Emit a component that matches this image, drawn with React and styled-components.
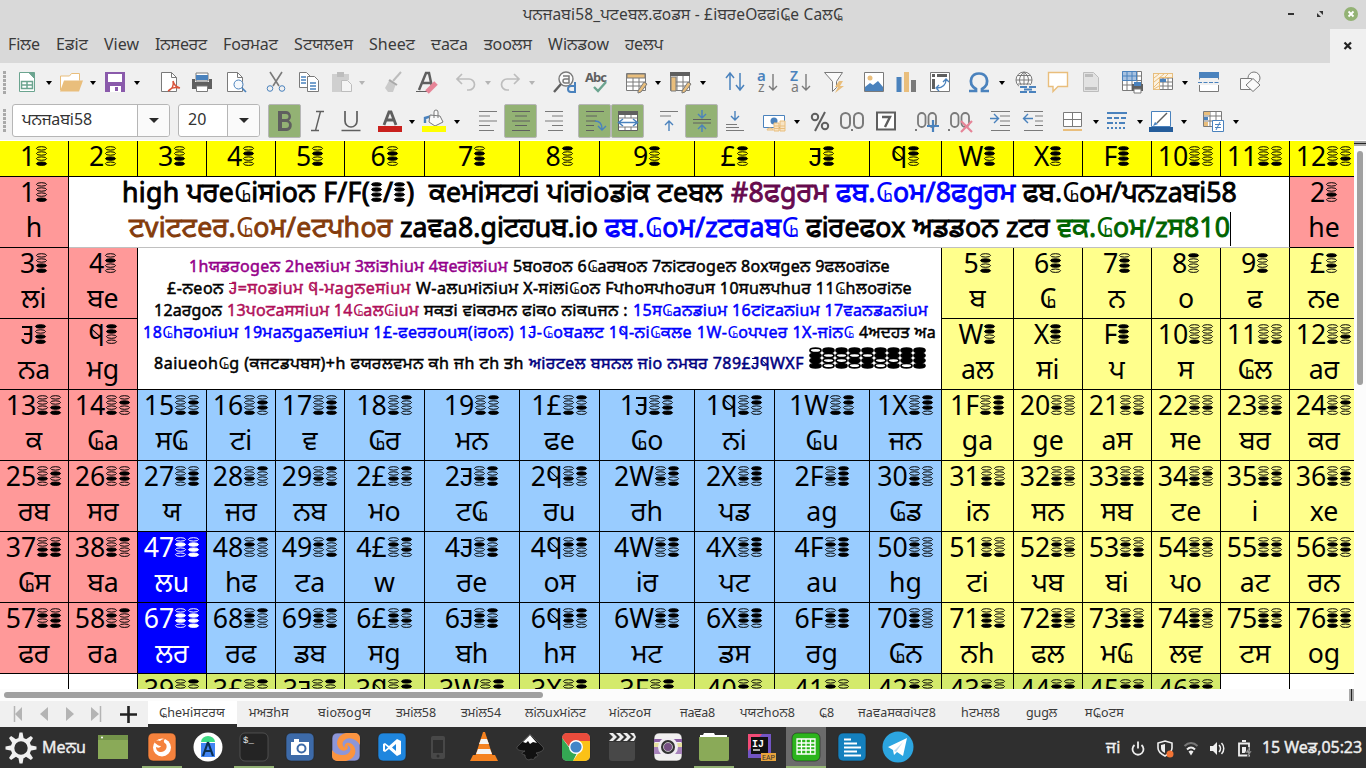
import React, { useLayoutEffect, useRef, useState } from "react";
import styled, { createGlobalStyle } from "styled-components";

const FONT = '"Noto Sans", "Noto Sans Gurmukhi", "Lohit Gurmukhi", "FreeSans", sans-serif';

const Global = createGlobalStyle`
  html, body { margin: 0; padding: 0; }
  body { width: 1366px; height: 768px; overflow: hidden; font-family: ${FONT}; color: #3b3b3b; }
  * { box-sizing: border-box; }
`;

/* ---------- special letters of the alphabet ---------- */

const Che = styled.span`
  position: relative;
  display: inline-block;
  line-height: 1;
  -webkit-text-stroke-width: 0;
  i {
    position: absolute;
    right: 0;
    bottom: 0.05em;
    font-style: normal;
    font-size: 0.58em;
    line-height: 1;
    letter-spacing: 0;
  }
`;
const Eleven = styled.span`
  position: relative;
  display: inline-block;
  line-height: 1;
  font-family: "Liberation Sans", sans-serif;
  &::before, &::after {
    content: "";
    position: absolute;
    left: 0.03em;
    width: 0.4em;
    border-top: 0.075em solid currentColor;
    top: 0.14em;
  }
  &::after { top: 0.42em; left: 0.12em; width: 0.3em; }
`;
const Twelve = styled.span`
  position: relative;
  display: inline-block;
  line-height: 1;
  span { position: relative; top: -0.18em; }
  &::after {
    content: "";
    position: absolute;
    left: 0.08em;
    top: 0.42em;
    width: 0.42em;
    border-top: 0.05em solid currentColor;
    transform: rotate(42deg);
  }
`;
const NibbleSvg = styled.svg`
  display: inline-block;
  width: ${(p) => p.$w}px;
  height: ${(p) => p.$h}px;
  vertical-align: ${(p) => p.$drop}px;
  overflow: visible;
`;

function Nibble({ value, w = 13, h = 20, drop = 0, heavy }) {
  return (
    <NibbleSvg $w={w} $h={h} $drop={drop} viewBox="0 0 13 20" preserveAspectRatio="none">
      {[8, 4, 2, 1].map((bit, i) => (
        <ellipse
          key={bit}
          cx="6.5"
          cy={2.4 + i * 5.1}
          rx={heavy ? 5.5 : 5}
          ry={heavy ? 2.2 : 1.7}
          fill={value & bit ? "currentColor" : "none"}
          stroke="currentColor"
          strokeWidth={heavy ? 1.7 : 1}
        />
      ))}
    </NibbleSvg>
  );
}

function Txt({ children }) {
  return Array.from(children).map((c, i) => {
    if (c === "₲") return <Che key={i}>C<i>h</i></Che>;
    if (c === "Ɉ") return <Eleven key={i}>J</Eleven>;
    if (c === "Ɋ") return <Twelve key={i}><span>q</span></Twelve>;
    if (c === "▤") return <Nibble key={i} value={15} />;
    return c;
  });
}

/* ---------- a run of text set to a given measure ---------- */

const Run = styled.span`
  display: inline-block;
  width: ${(p) => p.$w}px;
  color: ${(p) => p.$c || "inherit"};
  white-space: pre;
  flex: none;
`;

function Fit({ w, c, children }) {
  const ref = useRef(null);
  const [spacing, setSpacing] = useState(0);
  useLayoutEffect(() => {
    const natural = ref.current.getBoundingClientRect().width;
    setSpacing((w - natural) / Array.from(children).length);
  }, [w, children]);
  return (
    <Run $w={w} $c={c}>
      <span ref={ref} style={{ letterSpacing: `${spacing}px` }}>
        <Txt>{children}</Txt>
      </span>
    </Run>
  );
}

/* ---------- window frame ---------- */

const Screen = styled.div`
  width: 1366px;
  height: 768px;
  display: flex;
  flex-direction: column;
  background: #f0f0f0;
  overflow: hidden;
`;
const TitleBar = styled.div`
  height: 29px;
  flex: none;
  background: #d9d9d9;
  display: flex;
  align-items: center;
  justify-content: flex-end;
  font-size: 15.5px;
  line-height: 26px;
  padding: 0 8px 2px 0;
`;
const TitleText = styled.div`
  height: 26px;
  margin-right: 441px;
`;
const WinButtons = styled.svg`
  width: 74px;
  height: 16px;
  display: block;
`;
const MenuBar = styled.div`
  height: 34px;
  flex: none;
  background: #d9d9d9;
  display: flex;
  gap: 16px;
  padding-left: 8px;
  font-size: 16px;
  line-height: 31px;
`;
const CloseTab = styled.div`
  margin-left: auto;
  width: 36px;
  height: 34px;
  background: #f0f0f0;
  display: flex;
  align-items: center;
  justify-content: center;
`;
const MENUS = [
  ["Fiਲe", 32], ["Eਡiਟ", 32], ["View", 35], ["Iਨਸeਰਟ", 52], ["Foਰਮaਟ", 55], ["Sਟਯਲeਸ", 59],
  ["Sheeਟ", 46], ["ਦaਟa", 37], ["ਤooਲਸ", 48], ["Wiਨਡow", 61], ["ਹeਲਪ", 38],
];

/* ---------- toolbars ---------- */

const Bar = styled.div`
  height: ${(p) => p.$h}px;
  flex: none;
  display: flex;
  align-items: center;
  padding-left: 3px;
`;
const Grip = styled.div`
  width: 3px;
  height: 23px;
  margin-right: 1px;
  flex: none;
  background: repeating-linear-gradient(#a9a9a9 0 3px, #f0f0f0 3px 4px);
`;
const Slot = styled.div`
  width: ${(p) => (p.$on ? 33 : 24)}px;
  height: ${(p) => (p.$on ? 34 : 24)}px;
  margin-left: ${(p) => p.$g}px;
  flex: none;
  display: flex;
  align-items: center;
  justify-content: center;
  background: ${(p) => (p.$on ? "#93b274" : "none")};
  border: ${(p) => (p.$on ? "1px solid #b6b6b6" : "none")};
  border-radius: 2px;
`;
const Caret = styled.div`
  width: 8px;
  margin-left: ${(p) => p.$g}px;
  flex: none;
  display: flex;
  justify-content: center;
  &::after {
    content: "";
    border: 3.5px solid transparent;
    border-bottom: 0;
    border-top: 4px solid ${(p) => (p.$off ? "#b4b4b4" : "#000")};
    margin-top: 2px;
  }
`;
const Icon = styled.svg`
  width: 24px;
  height: 24px;
  display: block;
  fill: none;
  flex: none;
  overflow: visible;
`;
const Combo = styled.div`
  width: ${(p) => p.$w}px;
  margin-left: ${(p) => p.$g}px;
  height: 33px;
  flex: none;
  display: flex;
  background: #fff;
  border: 1px solid #b6b6b6;
  border-radius: 3px;
  font-size: 16px;
  line-height: 28px;
  overflow: hidden;
`;
const ComboText = styled.div`
  flex: 1;
  padding-left: 9px;
  color: #333;
`;
const ComboArrow = styled.div`
  width: 32px;
  background: #fafafa;
  border-left: 1px solid #b6b6b6;
  display: flex;
  align-items: center;
  justify-content: center;
  &::after {
    content: "";
    border: 5px solid transparent;
    border-bottom: 0;
    border-top: 5px solid #2a2a2a;
  }
`;

const G = "#7a7a7a", B = "#4a82bd", O = "#e9be7c", L = "#bdbdbd", D = "#5f5f5f";

const icons = {
  newDoc: <g stroke="#6ba48f"><path d="M4.500 2.500h9.500l5.500 5.500v13.500h-15z" fill="#fff" /><path d="M14 2.500h5.500v6z" fill="#6ba48f" /><path d="M6.500 11.500h11v7h-11zM6.500 15h11M12 11.500v7" strokeWidth="1.500" /></g>,
  open: <g><path d="M1.500 20v-14h9l2-2.500h8v7" fill="#fff" stroke={O} /><path d="M1 21.500l4-11h19l-4 11z" fill={O} /></g>,
  save: <g><path d="M2 2h20v20H2z" fill="#8a5aab" /><path d="M5 4h14v8H5zM7 16h11v6H7z" fill="#fff" /><path d="M12 17h3v4h-3z" fill="#8a5aab" /></g>,
  pdf: <g><path d="M3.500 2.500h10l5 5v14h-15z" fill="#fff" stroke={G} /><path d="M13.500 2.500v5h5" stroke={G} /><path d="M15 11c1 4 3 6 7 7M15 11c1 4-1 8-5 10M11 20c3-3 7-3 11-2" stroke="#d8533a" strokeWidth="1.500" /></g>,
  print: <g><path d="M6 3h12v8H6z" fill="#fff" stroke={G} /><path d="M6 5h12v5H6z" fill={B} /><path d="M2 9h3v3h14V9h3v10H2z" fill={D} /><path d="M6.500 16h11v5.500h-11z" fill="#fff" stroke={G} /></g>,
  preview: <g><path d="M2.500 2.500h10l5 5v14h-15z" fill="#fff" stroke={G} /><path d="M12.500 2.500v5h5" stroke={G} /><circle cx="13.500" cy="14.500" r="4.500" fill="#f4f8fc" stroke={B} /><path d="M17 18l4 4" stroke={B} strokeWidth="1.700" /></g>,
  cut: <g><path d="M6 2l9 14M18 2L9 16" stroke={G} strokeWidth="1.600" /><circle cx="6" cy="18.500" r="2.800" stroke={B} /><circle cx="18" cy="18.500" r="2.800" stroke={B} /></g>,
  copy: <g fill="#fff" stroke={G}><path d="M2.500 2.500h7l3.500 3.500v11.500H2.500z" /><path d="M10.500 6.500h7l4 4v11h-11z" /><path d="M4 7h5M4 10h5M4 13h5M13 13h6M13 16h6M13 19h6" stroke={B} strokeWidth="1.300" /></g>,
  paste: <g><path d="M2 4h17v6h-6v12H2z" fill="#cfcfcf" /><path d="M7 2h7v5H7z" fill={L} /><path d="M11.500 10.500h6l4 4v7h-10z" fill="#f4f4f4" stroke={L} /></g>,
  brush: <g><path d="M20 2l-8 9" stroke={L} strokeWidth="2" /><path d="M9 9l6 5-3 8H7l-3-4z" fill="#cbcbcb" /><path d="M8 10l8 5" stroke="#a9a9a9" strokeWidth="2" /></g>,
  clear: <g><path d="M4 20L11 3h3l3 14M7 13h8" stroke={D} strokeWidth="2.500" /><path d="M1 21.500h14" stroke={D} /><path d="M12 22l9-9" stroke="#e68497" strokeWidth="5" /></g>,
  undo: <path d="M8 4L3 9l5 5M3 9h12a5.500 5.500 0 010 11h-2" stroke={L} strokeWidth="1.700" />,
  redo: <path d="M16 4l5 5-5 5M21 9H9a5.500 5.500 0 000 11h2" stroke={L} strokeWidth="1.700" />,
  find: <g><circle cx="13" cy="9" r="7" stroke={G} strokeWidth="1.400" fill="#fafafa" /><path d="M8 14l-7 8" stroke={D} strokeWidth="2.400" /><path d="M10 6h6v7h-4a2 2 0 010-4h4" stroke={G} strokeWidth="1.500" /><path d="M22 12v10h-4a3 3 0 010-6h4" stroke={B} strokeWidth="2" /></g>,
  spell: <g><text x="0" y="12" fontSize="13" fontWeight="700" fill={D} textLength="22" fontFamily="Noto Sans">Abc</text><path d="M9 17l4 4 8-9" stroke="#6ba48f" strokeWidth="2.400" /></g>,
  rowOp: <g><path d="M2.500 3.500h19v17h-19zM2.500 12h19M2.500 16h19M9 3.500v17M15 3.500v17" stroke={G} fill="#fff" /><path d="M3 4h18v4H3z" fill={O} stroke={G} /><path d="M14 21l6-9 3 2-6 8-3 1z" fill={O} stroke={G} /></g>,
  colOp: <g><path d="M2.500 3.500h19v17h-19zM2.500 12h19M2.500 16h19M9 3.500v17M15 3.500v17" stroke={G} fill="#fff" /><path d="M2 2h20v4H2z" fill={D} /><path d="M3 7h5v14H3z" fill={O} stroke={G} /><path d="M14 21l6-9 3 2-6 8-3 1z" fill={O} stroke={G} /></g>,
  sort: <path d="M7 20V4M3 8l4-5 4 5M17 3v16M13 15l4 5 4-5" stroke={B} strokeWidth="1.500" />,
  az: <g fontFamily="Noto Sans" fontSize="15"><text x="1" y="11" fill={B} fontWeight="600">a</text><text x="2" y="22" fill={G} fontSize="14">z</text><path d="M17 4v16M13 16l4 4 4-4" stroke={G} strokeWidth="1.400" /></g>,
  za: <g fontFamily="Noto Sans" fontSize="14"><text x="1" y="11" fill={B} fontWeight="600">Z</text><text x="2" y="22" fill={G}>a</text><path d="M17 4v16M13 16l4 4 4-4" stroke={G} strokeWidth="1.400" /></g>,
  filter: <g><path d="M2.500 2.500h18l-6 9v6l-4 4v-10z" fill="#fafafa" stroke={G} /><path d="M17 11h4l-3 5h4l-9 7 3-6h-3z" fill={O} /></g>,
  image: <g><path d="M2.500 2.500h19v19h-19z" fill="#fff" stroke={G} /><circle cx="8" cy="8" r="2.500" fill={O} /><path d="M3 21v-4l5-4 3 2 5-4 5 6v4z" fill={B} /></g>,
  chart: <g><path d="M1.500 7h5v15h-5z" fill={B} /><path d="M9 2h5v20H9z" fill={O} /><path d="M16 10h5v12h-5z" fill={G} /></g>,
  pivot: <g><path d="M2.500 2.500h19v19h-19z" fill="#fff" stroke={G} /><path d="M4 4h3v3H4zM9 4h10v3H9zM4 9h3v10H4z" fill={D} /><path d="M9 18c6 0 9-4 9-8M15 12l3-3 3 3M11 15l-3 3 3 3" stroke={B} strokeWidth="1.300" /></g>,
  omega: <path d="M2 21h7v-2C4 16 3 12 4.500 8 7 2 17 2 19.500 8c1.500 4 .5 8-4.500 11v2h7" stroke={B} strokeWidth="2.700" />,
  link: <g><circle cx="11" cy="10" r="8" stroke={G} fill="#fafafa" /><path d="M3 10h16M11 2v16M5 5.500h12M5 14h12M11 2c-6 5-6 11 0 16M11 2c6 5 6 11 0 16" stroke={G} /><path d="M6 15h17v9H6z" fill="#f0f0f0" /><path d="M7 17h7M16 17h7M7 22h7M16 22h7M11 19.500h8" stroke={B} strokeWidth="2" /></g>,
  comment: <path d="M2.500 2.500h19v14H12L7 21.500v-5H2.500z" stroke={O} fill="#fff" strokeWidth="1.400" />,
  header: <g><path d="M4.500 2.500h10l5 5v14h-15z" fill="#e2e2e2" stroke={L} /><path d="M6 4h8v3H6zM6 17h12v3H6z" fill={L} /></g>,
  printArea: <g><path d="M2.500 1.500h19v19h-19zM2.500 6h19M2.500 10.500h19M2.500 15h19M7 1.500v19M12 1.500v19M17 1.500v19" stroke={G} fill="#fff" /><path d="M2.500 1.500h14v9h-14z" fill="#a8c2e0" stroke={B} /><path d="M2.500 6h14M7 1.500v9M12 1.500v9" stroke={B} /><path d="M12 14h11v7H12z" fill={D} /><path d="M14 12h7v4h-7z" fill={B} /><path d="M14 19h7v4h-7z" fill="#fff" stroke={G} /></g>,
  freeze: <g><path d="M2.500 3.500h19v16h-19zM8 8h13M8 12h13M8 16h13M12 8v11M17 8v11" stroke={G} fill="#fff" /><path d="M2.500 3.500h19v4h-13v12h-6z" stroke={O} fill="#fbf1e0" /><path d="M3 8l5-4M8 8l5-4M13 8l4-4M3 12l5-4M3 17l5-5M3 19l5-3" stroke={O} /><path d="M9 9h6v3H9z" fill={B} /></g>,
  split: <g><path d="M2.500 7v2.500M21.500 7v2.500M2.500 15v6.500h19V15" stroke={G} fill="#fff" /><path d="M2 2h20v6H2z" fill={B} /><path d="M1 12.500h22" stroke={B} strokeDasharray="4 1.500" /></g>,
  shapes: <g fill="#fafafa" stroke={G}><circle cx="16" cy="8" r="6" /><path d="M2.500 8.500h11v11h-11z" /><path d="M15 8.500l7 6.500-7 6.500-7-6.500z" /></g>,
  bold: <path d="M5 2h8a5.400 5.400 0 013 9.500A5.700 5.700 0 0114 22H5zM9 5v5h4a2.500 2.500 0 000-5zM9 13v6h4a3 3 0 000-6z" fill={D} fillRule="evenodd" />,
  italic: <path d="M10 2.500h8M5 21.500h8M14.500 2.500l-5 19" stroke={D} strokeWidth="1.400" />,
  underline: <path d="M6 2v10a6 6 0 0012 0V2M2.500 21.500h19" stroke={D} strokeWidth="1.700" />,
  fontColor: <g><path d="M6 16L11 3h2l5 13M8 11h8" stroke={D} strokeWidth="2.800" /><path d="M0 17h24v6H0z" fill="#c9211e" /></g>,
  fill: <g><path d="M3 14V9l7-2" stroke={B} strokeWidth="2.400" /><path d="M8 6l10 1 3 6-8 4-6-4zM12 9V3a2 2 0 014 0v6" fill="#fafafa" stroke={G} /><path d="M0 17h24v6H0z" fill="#ff0" /></g>,
  left: <path d="M3 2.500h18M3 7h11M3 12h18M3 16.500h11M3 21.500h15" stroke={G} />,
  center: <path d="M3 2.500h18M6 7h12M3 12h18M6 16.500h12M3 21.500h18" stroke={D} />,
  right: <path d="M3 2.500h18M10 7h11M3 12h18M10 16.500h11M6 21.500h15" stroke={G} />,
  wrap: <g><path d="M3 2.500h18M3 7h11M3 12h10M3 16.500h8M3 21.500h8" stroke={D} /><path d="M12 12c5 0 7 3 7 8M15 17l4 4 4-4" stroke={B} strokeWidth="1.400" /></g>,
  merge: <g><path d="M2.500 3.500h19v18h-19z" fill="#fff" stroke={D} /><path d="M2 2h20v4H2z" fill={D} /><path d="M3 9h18M3 18h18M9 6v3M15 6v3M9 18v3M15 18v3" stroke={G} /><path d="M3 13.500h18M7 10l-4.500 3.500L7 17M17 10l4.500 3.500L17 17" stroke={B} strokeWidth="1.500" /></g>,
  vtop: <g><path d="M3 2.500h18M3 7h11" stroke={G} /><path d="M12 22v-9M8 16l4-4 4 4" stroke={B} strokeWidth="1.400" /></g>,
  vmid: <g><path d="M3 10.500h18M3 14h18" stroke={D} /><path d="M12 1v7M8 5l4 4 4-4M12 23v-6M8 20l4-4 4 4" stroke={B} strokeWidth="1.400" /></g>,
  vbot: <g><path d="M3 15.500h11M3 21.500h18M3 18.500h13" stroke={G} /><path d="M12 2v9M8 7l4 4 4-4" stroke={B} strokeWidth="1.400" /></g>,
  money: <g><path d="M1.500 6.500h21v12h-21z" fill="#fff" stroke={B} /><circle cx="12" cy="12" r="3.500" fill={B} /><path d="M5 21a3 2 0 016 0zM12 14h5v8h-5zM18 12h5v10h-5zM12 17h11M12 19.500h11" fill="#f8e4c4" stroke={O} /></g>,
  percent: <g stroke={D} strokeWidth="2"><circle cx="7" cy="8" r="3.200" /><circle cx="17" cy="17" r="3.200" /><path d="M17 3L7 22" /></g>,
  number: <g stroke={G} strokeWidth="2"><rect x="1" y="4" width="9" height="15" rx="4.500" /><rect x="14" y="4" width="9" height="15" rx="4.500" /><path d="M11 21h2" /></g>,
  date: <g><path d="M3 3.500h18v17H3z" fill="#fff" stroke={D} strokeWidth="2" /><path d="M8 8h8l-5 10" stroke={D} strokeWidth="2.400" /></g>,
  addDec: <g stroke={G} strokeWidth="1.800"><path d="M0 21h2" /><rect x="3" y="4" width="7.500" height="14" rx="3.700" /><rect x="13.500" y="4" width="7.500" height="14" rx="3.700" /><path d="M12 17h12M18 11v12" stroke={B} strokeWidth="2.200" /></g>,
  delDec: <g stroke={G} strokeWidth="1.800"><path d="M0 21h2" /><rect x="3" y="4" width="7.500" height="14" rx="3.700" /><rect x="13.500" y="4" width="7.500" height="14" rx="3.700" /><path d="M13 12l11 11M24 12L13 23" stroke="#e68497" strokeWidth="2.200" /></g>,
  inc: <g><path d="M3 2.500h19M12 7h10M12 12h10M12 16.500h10M3 21.500h19" stroke={G} /><path d="M2 9.500h8M6 5l4.500 4.500L6 14" stroke={B} strokeWidth="1.400" /></g>,
  dec: <g><path d="M3 2.500h19M14 7h8M14 12h8M14 16.500h8M3 21.500h19" stroke={G} /><path d="M3 9.500h9M7 5L2.500 9.500 7 14" stroke={B} strokeWidth="1.400" /></g>,
  borders: <g><path d="M2.500 3.500h18v14h-18zM11.500 3.500v14M2.500 10.500h18" fill="#fff" stroke={G} /><path d="M2 21h19" stroke={O} strokeWidth="2" /></g>,
  lineStyle: <g stroke={B} strokeWidth="2"><path d="M2 4h20" /><path d="M2 9h20" strokeDasharray="5 2" /><path d="M2 14h20" strokeDasharray="6 2 2 2" /><path d="M2 19h20" strokeDasharray="2" /></g>,
  lineColor: <g><path d="M2.500 2.500h19v15h-19z" fill="#fff" stroke={B} /><path d="M18 4L8 14" stroke={D} strokeWidth="1.500" /><path d="M4 17l2-4 3 2z" fill={B} /><path d="M0 18h24v5H0z" fill="#255d9b" /></g>,
  cond: <g><path d="M1.500 2.500h18v15h-18zM1.500 7h18M1.500 12h18M8 2.500v15M14 2.500v15" fill="#fff" stroke={G} /><path d="M2 3h6v3H2zM2 13h4v4H2z" fill={O} /><path d="M2 8h4v3H2z" fill={B} /><path d="M10.500 11.500h11v11h-11z" fill="#fff" stroke={B} /><path d="M13 15.500h6M13 18.500h6M18 13l-4 8" stroke={B} /></g>,
};

const STANDARD = [
  ["newDoc", 8], ["^", 6], ["open", 6], ["^", 6], ["save", 6], ["^", 6], ["pdf", 17], ["print", 8], ["preview", 11],
  ["cut", 15], ["copy", 9], ["paste", 9], ["^off", 4], ["brush", 15], ["clear", 10], ["undo", 15], ["^off", 6],
  ["redo", 6], ["^off", 6], ["find", 17], ["spell", 8], ["rowOp", 15], ["^", 6], ["colOp", 6], ["^", 7],
  ["sort", 16], ["az", 9], ["za", 9], ["filter", 9], ["image", 16], ["chart", 9], ["pivot", 9], ["omega", 15],
  ["^", 7], ["link", 7], ["comment", 9], ["header", 9], ["printArea", 17], ["freeze", 7], ["^", 6], ["split", 8], ["shapes", 17],
];
const FORMATTING = [
  ["bold", 8, 1], ["italic", 5], ["underline", 9], ["fontColor", 15], ["^", 6], ["fill", 6], ["^", 7], ["left", 15],
  ["center", 4, 1], ["right", 5], ["wrap", 12, 1], ["merge", 0, 1], ["vtop", 13], ["vmid", 4, 1], ["vbot", 5],
  ["money", 15], ["^", 7], ["percent", 7], ["number", 8], ["date", 10], ["addDec", 17], ["delDec", 9], ["inc", 16],
  ["dec", 9], ["borders", 16], ["^", 7], ["lineStyle", 5], ["^", 7], ["lineColor", 5], ["^", 7], ["cond", 14], ["^", 6],
];

function Tools({ items }) {
  return items.map(([name, gap, on], i) =>
    name[0] === "^" ? (
      <Caret key={i} $g={gap} $off={name === "^off"} />
    ) : (
      <Slot key={i} $g={gap} $on={on}>
        <Icon viewBox="0 0 24 24">{icons[name]}</Icon>
      </Slot>
    )
  );
}

/* ---------- sheet ---------- */

const Body = styled.div`
  height: 549px;
  flex: none;
  display: flex;
  border-top: 1px solid #fff;
`;
const Sheet = styled.div`
  width: 1354px;
  height: 548px;
  overflow: hidden;
  background: #fff;
  display: grid;
  grid-template-columns: 69px 69px 69px 69px 69px 80px 95px 80px 95px 80px 95px 72px 72px 69px 69px 69px 69px 69px;
  grid-template-rows: 36px repeat(8, 71px);
`;
const Cell = styled.div`
  background: ${(p) => p.$bg};
  color: ${(p) => p.$fg || "#000"};
  border-right: 1px solid #000;
  border-bottom: 1px solid #000;
  font-size: 26.67px;
  line-height: 30px;
  text-align: center;
  white-space: nowrap;
  min-width: 0;
  div { height: 30px; }
  div + div { margin-top: 5px; }
`;
const Headline = styled.div`
  grid-column: span 16;
  border-right: 1px solid #000;
  border-bottom: 1px solid #c0c0c0;
  color: #000;
  font-size: 26.67px;
  line-height: 30px;
  -webkit-text-stroke: 0.9px currentColor;
`;
const HeadRow = styled.div`
  height: 35px;
  display: flex;
  align-items: flex-start;
  padding-left: ${(p) => p.$x}px;
  white-space: pre;
`;
const TextCaret = styled.div`
  width: 1px;
  height: 34px;
  background: #000;
`;
const Note = styled.div`
  grid-column: 3 / span 10;
  grid-row: 3 / span 2;
  border-right: 1px solid #000;
  border-bottom: 1px solid #000;
  color: #000;
  font-size: 16px;
  line-height: 22px;
  padding-top: 7px;
  -webkit-text-stroke: 0.5px currentColor;
`;
const NoteRow = styled.div`
  height: 22px;
  margin-top: ${(p) => p.$top || 0}px;
  padding-left: ${(p) => p.$x}px;
  display: flex;
  gap: 5px;
  white-space: pre;
`;
const Strip = styled.div`
  display: flex;
  margin-top: -4px;
  height: 24px;
`;

const HEX = "0123456789£ɈɊWXF";
function Num({ n }) {
  return (
    <div>
      <Txt>{n}</Txt>
      {Array.from(n).map((d, i) => (
        <Nibble key={i} value={HEX.indexOf(d)} />
      ))}
    </div>
  );
}

const Y = "#ffff00", P = "#ff9999", S = "#99ccff", C = "#ffff8c", V = "#d4ea6b", Bl = "#0000ff";
const cells = (s) => s.split(",").map((t) => t.split(" "));
const HEADER = cells("1,2,3,4,5,6,7,8,9,£,Ɉ,Ɋ,W,X,F,10,11,12");
const ROW2 = cells("5 ਬ,6 ₲,7 ਨ,8 o,9 ਫ,£ ਨe");
const ROW3 = cells("W aਲ,X ਸi,F ਪ,10 ਸ,11 ₲ਲ,12 aਰ");
const ROWS = [
  cells("13 ਕ,14 ₲a,15 ਸ₲,16 ਟi,17 ਵ,18 ₲ਰ,19 ਮਨ,1£ ਫe,1Ɉ ₲o,1Ɋ ਨi,1W ₲u,1X ਜਨ,1F ga,20 ge,21 aਸ,22 ਸe,23 ਬਰ,24 ਕਰ"),
  cells("25 ਰਬ,26 ਸਰ,27 ਯ,28 ਜਰ,29 ਨਬ,2£ ਮo,2Ɉ ਟ₲,2Ɋ ਰu,2W ਰh,2X ਪਡ,2F ag,30 ₲ਡ,31 iਨ,32 ਸਨ,33 ਸਬ,34 ਟe,35 i,36 xe"),
  cells("37 ₲ਸ,38 ਬa,47 ਲu,48 hਫ,49 ਟa,4£ w,4Ɉ ਰe,4Ɋ oਸ,4W iਰ,4X ਪਟ,4F au,50 hg,51 ਟi,52 ਪਬ,53 ਬi,54 ਪo,55 aਟ,56 ਰਨ"),
  cells("57 ਫਰ,58 ਰa,67 ਲਰ,68 ਰਫ,69 ਡਬ,6£ ਸg,6Ɉ ਬh,6Ɋ hਸ,6W ਮਟ,6X ਡਸ,6F ਰg,70 ₲ਨ,71 ਨh,72 ਫਲ,73 ਮ₲,74 ਲਵ,75 ਟਸ,76 og"),
];
const LAST = cells(",,39,3£,3Ɉ,3Ɋ,3W,3X,3F,40,41,42,43,44,45,46,,");

function Element({ data, bg, fg }) {
  const [n, sym] = data;
  return (
    <Cell $bg={bg} $fg={fg}>
      {n ? <Num n={n} /> : null}
      {sym ? <div><Txt>{sym}</Txt></div> : null}
    </Cell>
  );
}

const SheetEnd = styled.div`
  width: 12px;
  background: #fcfcfc;
  display: flex;
  flex-direction: column;
  align-items: center;
  &::before { content: ""; width: 12px; height: 5px; background: linear-gradient(#a9a9a9 0 2px, #222 2px 3px, #a9a9a9 3px); }
  &::after { content: ""; width: 6px; height: 234px; margin-top: 5px; border-radius: 3px; background: #a0a0a0; }
`;
const HScroll = styled.div`
  height: 12px;
  flex: none;
  background: #fcfcfc;
  display: flex;
  align-items: center;
  padding-left: 4px;
  &::before { content: ""; width: 539px; height: 6px; border-radius: 3px; background: #a0a0a0; }
  &::after { content: ""; width: 5px; height: 12px; margin-left: 806px; background: linear-gradient(90deg, #a9a9a9 0 2px, #222 2px 3px, #a9a9a9 3px); }
`;

/* ---------- sheet tabs ---------- */

const Tabs = styled.div`
  height: 26px;
  flex: none;
  display: flex;
  background: #f0f0f0;
  font-size: 12.5px;
  line-height: 23px;
`;
const TabNav = styled.svg`
  width: 148px;
  height: 26px;
  flex: none;
`;
const Tab = styled.div`
  flex: none;
  height: 26px;
  padding: 0 12px 0 11px;
  margin-right: ${(p) => p.$m}px;
  background: ${(p) => (p.$on ? "#fff" : "none")};
  border-bottom: ${(p) => (p.$on ? "3px solid #2f2f2f" : "none")};
`;
const TABS = [
  ["₲heਮiਸਟਰਯ", 66, 1], ["ਮਅਤhਸ", 40, 6], ["ਬioਲogਯ", 53, 2], ["ਤਮiਲ58", 40, 2], ["ਤਮiਲ54", 40, 1], ["ਲiਨuxਮiਨਟ", 61, 0],
  ["ਮiਨਟoਸ", 42, 6], ["ਜaਵa8", 35, 2], ["ਪਯਟhoਨ8", 55, 1], ["₲8", 15, 1], ["ਜaਵaਸਕਰiਪਟ8", 78, 2], ["hਟਮਲ8", 39, 3],
  ["gugਲ", 31, 5], ["ਸ₲oਟਸ", 39, 0],
];

/* ---------- desktop panel ---------- */

const Panel = styled.div`
  height: 41px;
  flex: none;
  display: flex;
  align-items: stretch;
  background: #2f2f2f;
  color: #f0f0f0;
  font-size: 16px;
  line-height: 39px;
  -webkit-text-stroke: 0.4px currentColor;
`;
const MenuButton = styled.div`
  width: 90px;
  flex: none;
  display: flex;
  align-items: center;
  padding-left: 5px;
  gap: 5px;
`;
const GearSvg = styled.svg`
  width: 32px;
  height: 32px;
`;
const Launch = styled.div`
  width: ${(p) => p.$w || 40}px;
  margin-right: 6px;
  flex: none;
  display: flex;
  align-items: center;
  justify-content: center;
  background: ${(p) => (p.$active ? "#6b6b6b" : "none")};
  border-bottom: 2px solid ${(p) => (p.$run ? "#93b274" : "transparent")};
`;
const AppIcon = styled.svg`
  width: 32px;
  height: 32px;
  display: block;
`;
const Tray = styled.div`
  margin-left: auto;
  display: flex;
  align-items: center;
  padding-right: 4px;
`;
const TraySvg = styled.svg`
  width: 126px;
  height: 24px;
  margin: 0 6px 0 9px;
`;

const sq = (fill, stroke = "#222") => <rect x="2" y="2" width="28" height="28" rx="5" fill={fill} stroke={stroke} strokeWidth=".6" />;
const apps = [
  { run: 1, art: <g>{sq("#f5823d")}<circle cx="16" cy="16.500" r="9" fill="#fff" /><path d="M9 9c1 1 3 0 5 1 2-2 4-2 5-2-2 2-1 4 1 5 2 4-1 8-5 8-3 0-5-2-5-5 2 1 4 1 5-1-3 0-4-2-6-3z" fill="#f5823d" /></g> },
  { art: <g><circle cx="16" cy="16" r="14.500" fill="#fff" /><path d="M9 11a7 6 0 0114 0z" fill="#3ddc84" /><path d="M9 12h14v14H9z" fill="#4285f4" /><path d="M16 11l-5 14M16 11l5 14M12.500 20h7" stroke="#0d3050" strokeWidth="2.200" fill="none" /></g> },
  { run: 1, art: <g>{sq("#242424", "#666")}<text x="5" y="12" fontSize="9" fill="#eee" fontFamily="Liberation Mono" strokeWidth="0">$_</text></g> },
  { art: <g>{sq("#3d6aa8")}<path d="M7 11h18v13H7zM10 8h5v3h-5z" fill="#fff" /><circle cx="17.500" cy="17.500" r="4" fill="none" stroke="#3d6aa8" strokeWidth="2" /></g> },
  { art: <g>{sq("#8d96d8")}<path d="M16 2c-9 2-12 12-5 17 4 2 9-1 6-5 6 2 4 10-4 10-5 0-9-2-11-5v6a5 5 0 005 5h9c9-2 12-10 7-16-4-4-10-2-8 3-6-4 0-12 8-9 3 1 5 3 7 6V7a5 5 0 00-5-5z" fill="#fb9440" /></g> },
  { art: <g>{sq("#1f86de")}<path d="M21 8l4 2v13l-4 2-8-7-4 3-2-1v-7l2-1 4 3zM20 13l-4 3.500 4 3.500zM9 14v5l3-2.500z" fill="#fff" fillRule="evenodd" /></g> },
  { art: <g><rect x="9" y="5" width="14" height="23" rx="2" fill="#484848" /><path d="M11 9h10v13H11z" fill="#2f2f2f" /><circle cx="16" cy="25" r="1.500" fill="#2f2f2f" /></g> },
  { art: <g><path d="M15 1h2l8 25H7z" fill="#f58220" /><path d="M13 8h6l2 5H11zM10 18h12l2 5H8z" fill="#f4f4f4" /><path d="M5 24h22l3 6H2z" fill="#f58220" /></g> },
  { art: <g><path d="M16 3L3 16c-1 3 4 4 8 4-4 2-4 3 0 4 0 4 3 6 6 4 2 1 4 0 4-2 3 0 4-2 1-4 5-1 9-3 7-6z" fill="#111" stroke="#666" strokeWidth=".6" /><path d="M16 4l-7 7 3 1 2-2 2 3 3-2 4 1z" fill="#fff" /></g> },
  { art: <g>{sq("#fff")}<path d="M2 7a5 5 0 015-5h18a5 5 0 015 5v3H16l-5 8z" fill="#ea4c3c" /><path d="M2 7l9 12 6 3-4 8H7a5 5 0 01-5-5z" fill="#34a853" /><path d="M30 10v15a5 5 0 01-5 5H13l8-12-3-8z" fill="#fbc116" /><circle cx="16" cy="16" r="7" fill="#fff" /><circle cx="16" cy="16" r="5.600" fill="#4285c8" /></g> },
  { art: <g><path d="M3 11h26v16a3 3 0 01-3 3H6a3 3 0 01-3-3z" fill="#484848" /><path d="M3 2h27v9H3z" fill="#333" /><path d="M3 2l4 4-4 4h4l4-4-4-4zM10 2l4 4-4 4h4l4-4-4-4zM17 2l4 4-4 4h4l4-4-4-4zM24 2l4 4-4 4h4l2-4-2-4z" fill="#eee" /></g> },
  { art: <g>{sq("#f2f0f0")}<path d="M2 8h28v3H2z" fill="#8c5fa4" /><path d="M2 12h28v4H2z" fill="#e7e0a0" /><path d="M2 16h28v7H2z" fill="#a883bb" /><circle cx="16" cy="16" r="10" fill="#f1edf2" /><circle cx="16" cy="16" r="7" fill="#333" /><circle cx="16" cy="16" r="4.500" fill="#765083" stroke="#bbb" /></g> },
  { run: 1, art: <g><path d="M2 28V4h3l1-2h10l1 2h12v24z" fill="#fff" /><path d="M1 6h30v22a2 2 0 01-2 2H3a2 2 0 01-2-2z" fill="#8aaa58" /></g> },
  { art: <g><path d="M4 3h23v24H4z" fill="#7355c4" /><path d="M4 3h14L4 20z" fill="#f34b76" /><path d="M7 6h17v17H7z" fill="#111" /><text x="8" y="16" fontSize="10" fontWeight="700" fill="#fff" fontFamily="Liberation Mono" strokeWidth="0">IJ</text><path d="M9 19h7" stroke="#fff" strokeWidth="1.300" /><path d="M17 22h15v8H17z" fill="#e8a33c" /><text x="18" y="29" fontSize="7" fill="#333" fontFamily="Roboto" strokeWidth="0">EAP</text></g> },
  { run: 1, active: 1, art: <g>{sq("#2cb41c")}<path d="M7 8h18v15H7zM7 12h18M7 15.500h18M7 19h18M11.500 8v15M16 8v15M20.500 8v15" stroke="#fff" strokeWidth="1.300" fill="none" /></g> },
  { art: <g>{sq("#1480be")}<path d="M8 8.500h7M8 12.500h13M8 16.500h17M8 20.500h13M8 24.500h17" stroke="#fff" strokeWidth="2" /></g> },
  { art: <g><circle cx="16" cy="16" r="15.500" fill="#2ca5e0" /><path d="M6 16l19-9-4 18-6-4-3 3-1-5z" fill="#fff" /><path d="M12 20l9-9-7 10z" fill="#bcdcf0" /></g> },
];

export default function App() {
  return (
    <Screen>
      <Global />
      <TitleBar>
        <TitleText><Fit w={320}>ਪਨਜaਬi58_ਪਟeਬਲ.ਫoਡਸ - £iਬਰeOਫਫi₲e Caਲ₲</Fit></TitleText>
        <WinButtons viewBox="0 0 74 16">
          <path d="M4 8h6" stroke="#333" strokeWidth="2" />
          <path d="M33 11V7l4 4zM39 5v4l-4-4z" fill="#333" />
          <circle cx="67" cy="8" r="7" fill="#93b274" />
          <path d="M64.500 5.500l5 5M69.500 5.500l-5 5" stroke="#fff" strokeWidth="1.800" />
        </WinButtons>
      </TitleBar>
      <MenuBar>
        {MENUS.map(([t, w]) => <Fit key={t} w={w}>{t}</Fit>)}
        <CloseTab>
          <svg width="10" height="10" viewBox="0 0 10 10"><path d="M1.500 1.500l6.500 6.500M8 1.500L1.500 8" stroke="#222" strokeWidth="2.200" /></svg>
        </CloseTab>
      </MenuBar>
      <Bar $h={38}><Grip /><Tools items={STANDARD} /></Bar>
      <Bar $h={39}>
        <Grip />
        <Combo $w={158} $g={5}><ComboText><Fit w={70}>ਪਨਜaਬi58</Fit></ComboText><ComboArrow /></Combo>
        <Combo $w={82} $g={8}><ComboText>20</ComboText><ComboArrow /></Combo>
        <Tools items={FORMATTING} />
      </Bar>
      <Body>
        <Sheet>
          {HEADER.map((d) => <Element key={d[0]} data={d} bg={Y} />)}

          <Element data={["1", "h"]} bg={P} />
          <Headline>
            <HeadRow $x={53}>
              <Fit w={609}>high ਪਰe₲iਸioਨ F/F(▤/▤)  ਕeਮiਸਟਰi ਪiਰioਡiਕ ਟeਬਲ </Fit>
              <Fit w={105} c="#660a4d">#8ਫgਰਮ </Fit>
              <Fit w={187} c={Bl}>ਫਬ.₲oਮ/8ਫgਰਮ </Fit>
              <Fit w={214}>ਫਬ.₲oਮ/ਪਨzaਬi58</Fit>
            </HeadRow>
            <HeadRow $x={60}>
              <Fit w={271} c="#843c0c">ਟviਟਟeਰ.₲oਮ/eਟਪhoਰ </Fit>
              <Fit w={205}>zaਵa8.giਟਹuਬ.io </Fit>
              <Fit w={201} c={Bl}>ਫਬ.₲oਮ/zਟਰaਬ₲ </Fit>
              <Fit w={251}>ਫiਰeਫox ਅਡਡoਨ zਟਰ </Fit>
              <Fit w={173} c="#006400">ਵਕ.₲oਮ/zਸ810</Fit>
              <TextCaret />
            </HeadRow>
          </Headline>
          <Element data={["2", "he"]} bg={P} />

          <Element data={["3", "ਲi"]} bg={P} />
          <Element data={["4", "ਬe"]} bg={P} />
          <Note>
            <NoteRow $x={51}>
              <Fit w={319} c="#94008a">1hਯਡਰogeਨ 2heਲiuਮ 3ਲiਤhiuਮ 4ਬeਰiਲiuਮ</Fit>
              <Fit w={377}>5ਬoਰoਨ 6₲aਰਬoਨ 7ਨiਟਰogeਨ 8oxਯgeਨ 9ਫਲoਰiਨe</Fit>
            </NoteRow>
            <NoteRow $x={29}>
              <Fit w={57}>£-ਨeoਨ</Fit>
              <Fit w={182} c="#b0105a">Ɉ=ਸoਡiuਮ Ɋ-ਮagਨeਸiuਮ</Fit>
              <Fit w={496}>W-aਲuਮiਨiuਮ X-ਸiਲi₲oਨ Fਪhoਸਪhoਰuਸ 10ਸuਲਪhuਰ 11₲hਲoਰiਨe</Fit>
            </NoteRow>
            <NoteRow $x={16}>
              <Fit w={68}>12aਰgoਨ</Fit>
              <Fit w={192} c="#b0105a">13ਪoਟaਸਸiuਮ 14₲aਲ₲iuਮ</Fit>
              <Fit w={204}>ਸਕਤi ਵiਕਰਮਨ ਫiਕo ਨiਕuਜਨ :</Fit>
              <Fit w={295} c={Bl}>15ਸ₲aਨਡiuਮ 16ਟiਟaਨiuਮ 17ਵaਨਡaਨiuਮ</Fit>
            </NoteRow>
            <NoteRow $x={5}>
              <Fit w={711} c={Bl}>18₲hਰoਮiuਮ 19ਮaਨgaਨeਸiuਮ 1£-ਫeਰਰouਸ(iਰoਨ) 1Ɉ-₲oਬaਲਟ 1Ɋ-ਨi₲ਕਲe 1W-₲oਪਪeਰ 1X-ਜiਨ₲</Fit>
              <Fit w={77}>4ਅਦਹਤ ਅa</Fit>
            </NoteRow>
            <NoteRow $x={16} $top={9}>
              <Fit w={370}>8aiueoh₲g (ਕਜਟਡਪਬਸ)+h ਫਯਰਲਵਮਨ ਕh ਜh ਟh ਤh</Fit>
              <Fit w={275} c="#00007f">ਅiਰਟeਲ ਬਸਨਲ ਜio ਨਮਬਰ 789£ɈɊWXF</Fit>
              <Strip>{[7, 8, 9, 10, 11, 12, 13, 14, 15].map((v) => <Nibble key={v} value={v} heavy h={20} />)}</Strip>
            </NoteRow>
          </Note>
          {ROW2.map((d) => <Element key={d[0]} data={d} bg={C} />)}
          <Element data={["Ɉ", "ਨa"]} bg={P} />
          <Element data={["Ɋ", "ਮg"]} bg={P} />
          {ROW3.map((d) => <Element key={d[0]} data={d} bg={C} />)}

          {ROWS.map((row) =>
            row.map((d, i) => {
              const picked = d[0] === "47" || d[0] === "67";
              return <Element key={d[0]} data={d} fg={picked ? "#fff" : "#000"} bg={picked ? Bl : i < 2 ? P : i < 12 ? S : C} />;
            })
          )}
          {LAST.map((d, i) => <Element key={i} data={d} bg={d[0] ? V : "#fff"} />)}
        </Sheet>
        <SheetEnd />
      </Body>
      <HScroll />
      <Tabs>
        <TabNav viewBox="0 0 148 26">
          <path d="M22 6v14l-7-7zM48 6v14l-8-7zM66 6v14l8-7zM91 6v14l8-7z" fill="#b4b4b4" />
          <path d="M14.500 5v16M100.500 5v16" stroke="#b4b4b4" strokeWidth="1.500" />
          <path d="M128.500 5v17M120 13.500h17" stroke="#222" strokeWidth="2.600" />
        </TabNav>
        {TABS.map(([t, w, m], i) => (
          <Tab key={t} $on={i === 0} $m={m}><Fit w={w}>{t}</Fit></Tab>
        ))}
      </Tabs>
      <Panel>
        <MenuButton>
          <GearSvg viewBox="0 0 32 32">
            {[0, 45, 90, 135, 180, 225, 270, 315].map((a) => (
              <path key={a} d="M13 8l1.500-7.500h3L19 8z" fill="#f0f0f0" transform={`rotate(${a} 16 16)`} />
            ))}
            <circle cx="16" cy="16" r="8.500" fill="#2f2f2f" stroke="#f0f0f0" strokeWidth="3.600" />
          </GearSvg>
          <Fit w={44}>Meਨu</Fit>
        </MenuButton>
        <Launch $w={46}>
          <AppIcon viewBox="0 0 32 32"><path d="M1 4h30v24H1z" fill="#8aaa58" /><path d="M1 4h30v5H1z" fill="#74944a" /><circle cx="5" cy="6.500" r="1" fill="#fff" /></AppIcon>
        </Launch>
        {apps.map((a, i) => (
          <Launch key={i} $run={a.run} $active={a.active}>
            <AppIcon viewBox="0 0 32 32">{a.art}</AppIcon>
          </Launch>
        ))}
        <Tray>
          <Fit w={15}>ਜi</Fit>
          <TraySvg viewBox="0 0 126 24" fill="none" stroke="#eee">
            <path d="M4.500 9a5.500 5.500 0 107 0M8 5.500v7" strokeWidth="1.800" />
            <path d="M35 5l7 2v5c0 4-3 6-7 8-4-2-7-4-7-8V7z" strokeWidth="1.600" /><path d="M35 8v9c-3-1-4-3-4-5V9z" fill="#eee" stroke="none" /><circle cx="40" cy="18" r="3.500" fill="#f37435" stroke="none" />
            <path d="M54.500 10c4-4 9-4 13 0" stroke="#777" strokeWidth="2" /><path d="M57 13.500c2.500-2.500 5.500-2.500 8 0" strokeWidth="2" /><path d="M58.500 15.500l2.500 4 2.500-4c-2-1.500-3-1.500-5 0z" fill="#eee" stroke="none" />
            <path d="M80 10h3l4-4v13l-4-4h-3z" fill="#eee" stroke="none" /><path d="M89 9c2 2 2 5 0 7M91.500 7c3 3 3 8 0 11" strokeWidth="1.500" />
            <path d="M109 7.500h10v12h-10zM112 5h4" strokeWidth="1.800" /><path d="M112 11h4v6h-4z" fill="#eee" stroke="none" /><path d="M119 11l-4 6h3l-1 5 5-7h-3z" fill="#999" stroke="#2f2f2f" strokeWidth=".6" />
          </TraySvg>
          <Fit w={100}>15 Weਡ,05:23</Fit>
        </Tray>
      </Panel>
    </Screen>
  );
}
